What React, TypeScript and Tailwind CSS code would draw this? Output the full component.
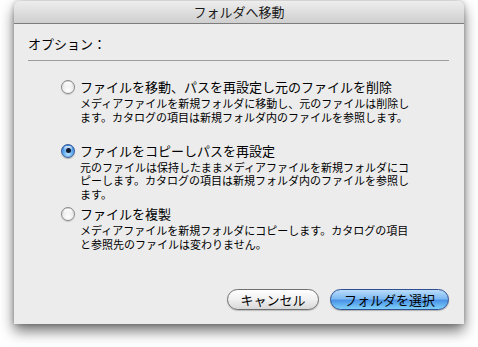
import React from "react";

const font = { fontFamily: '"Noto Sans CJK JP", "Noto Sans", sans-serif' };

function Radio({ checked }: { checked?: boolean }) {
  if (checked) {
    return (
      <span className="relative w-[14px] h-[14px] rounded-full border border-[#3a5f9a] bg-[radial-gradient(circle_at_50%_75%,#b8e4ff_0%,#5aa7ec_45%,#2a6fd0_100%)] flex items-center justify-center shrink-0 shadow-[0_1px_1px_rgba(0,0,0,0.25)]">
        <span className="absolute left-[2px] right-[2px] top-[1px] h-[5px] rounded-full bg-gradient-to-b from-white/80 to-white/10" />
        <span className="w-[5px] h-[5px] rounded-full bg-[#111a2e] relative" />
      </span>
    );
  }
  return (
    <span className="relative w-[14px] h-[14px] rounded-full border border-[#8a8a8a] bg-[radial-gradient(circle_at_50%_75%,#ffffff_0%,#ececec_50%,#c8c8c8_100%)] shrink-0 shadow-[0_1px_1px_rgba(0,0,0,0.15)]">
      <span className="absolute left-[2px] right-[2px] top-[1px] h-[5px] rounded-full bg-gradient-to-b from-white to-white/20" />
    </span>
  );
}

function Option({ checked, title, lines }: { checked?: boolean; title: string; lines: string[] }) {
  return (
    <div className="h-[63.5px] flex flex-col">
      <div className="flex items-center gap-[5px] h-[16px]">
        <Radio checked={checked} />
        <span className="text-[13px] leading-[16px] text-black">{title}</span>
      </div>
      <div className="pl-[19px] mt-[2px] text-[11px] leading-[13.5px] text-black">
        {lines.map((l, i) => (
          <div key={i}>{l}</div>
        ))}
      </div>
    </div>
  );
}

export default function App() {
  return (
    <div className="w-[478px] h-[347px] bg-white overflow-hidden" style={font}>
      <div className="ml-[14px] mt-[1px] w-[450px] h-[323px] rounded-t-[6px] bg-[#ececec] shadow-[0_7px_14px_rgba(0,0,0,0.55),0_0_5px_rgba(0,0,0,0.25)] flex flex-col">
        <div className="h-[23px] rounded-t-[6px] border-b border-[#7c7c7c] bg-gradient-to-b from-[#eeeeee] via-[#dedede] to-[#cfcfcf] flex items-center justify-center">
          <span className="text-[13px] leading-[16px] text-[#1a1a1a]">フォルダへ移動</span>
        </div>
        <div className="flex-1 flex flex-col pl-[14px] pr-[15px]">
          <div className="mt-[12px] text-[13px] leading-[16px] text-black">オプション：</div>
          <div className="mt-[8px] h-px bg-[#9c9c9c]" />
          <div className="mt-[18px] pl-[33px] flex flex-col">
            <Option
              title="ファイルを移動、パスを再設定し元のファイルを削除"
              lines={[
                "メディアファイルを新規フォルダに移動し、元のファイルは削除し",
                "ます。カタログの項目は新規フォルダ内のファイルを参照します。",
              ]}
            />
            <Option
              checked
              title="ファイルをコピーしパスを再設定"
              lines={[
                "元のファイルは保持したままメディアファイルを新規フォルダにコ",
                "ピーします。カタログの項目は新規フォルダ内のファイルを参照し",
                "ます。",
              ]}
            />
            <Option
              title="ファイルを複製"
              lines={[
                "メディアファイルを新規フォルダにコピーします。カタログの項目",
                "と参照先のファイルは変わりません。",
              ]}
            />
          </div>
          <div className="mt-auto mb-[14px] flex justify-end gap-[11px]">
            <button className="w-[92px] h-[21px] rounded-full border border-[#6f6f6f] bg-gradient-to-b from-[#ffffff] via-[#f0f0f0] to-[#d8d8d8] text-[13px] leading-[16px] text-black flex items-center justify-center shadow-[0_1px_1px_rgba(0,0,0,0.2)]">
              キャンセル
            </button>
            <button className="w-[119px] h-[21px] rounded-full border border-[#2e4f8f] bg-[linear-gradient(to_bottom,#b9dcfb_0%,#7fbaf2_45%,#4a93e6_55%,#7fd0fb_100%)] text-[13px] leading-[16px] text-black flex items-center justify-center shadow-[0_1px_1px_rgba(0,0,0,0.25)]">
              フォルダを選択
            </button>
          </div>
        </div>
      </div>
    </div>
  );
}
